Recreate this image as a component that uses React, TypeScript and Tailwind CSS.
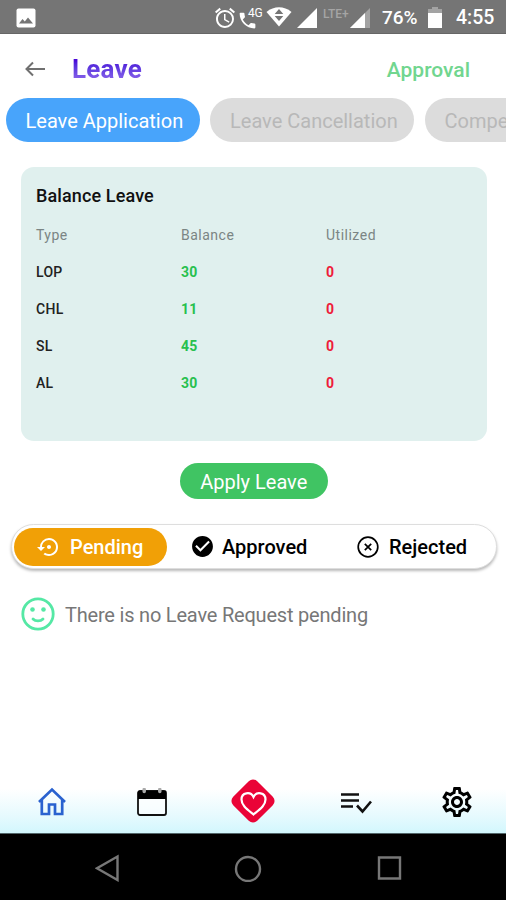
import { MdAlarm, MdCheckCircle, MdOutlineSettings, MdPhone, MdSettingsBackupRestore } from "react-icons/md";

const tabs = [
  { label: "Leave Application", active: true, width: "w-[194px]" },
  { label: "Leave Cancellation", active: false, width: "w-[204px]" },
  { label: "Compe", active: false, width: "w-[120px]" },
];

const balances = [
  { type: "LOP", balance: 30, utilized: 0 },
  { type: "CHL", balance: 11, utilized: 0 },
  { type: "SL", balance: 45, utilized: 0 },
  { type: "AL", balance: 30, utilized: 0 },
];

function StatusBar() {
  return (
    <div className="flex h-[34px] items-center border-b border-[#666] bg-[#757575] pl-4 text-white">
      <svg className="mt-0.5 h-5 w-5" viewBox="0 0 20 20">
        <rect x="0.5" y="0.5" width="19" height="19" rx="2" fill="#fff" />
        <path d="M3 15.5 6.5 11l2.3 2.6L12 9.5l5 6z" fill="#757575" />
      </svg>
      <MdAlarm className="mt-0.5 ml-[177px] h-[24px] w-[24px]" />
      <div className="relative ml-[2px] h-6 w-[24px]">
        <MdPhone className="absolute top-[5px] -left-0.5 h-[21px] w-[21px]" />
        <span className="absolute top-[3px] left-[9px] bg-[#757575] text-[12px] leading-[10px] tracking-[-0.3px]">4G</span>
      </div>
      <svg className="mt-px ml-[3px] h-5 w-[26px]" viewBox="0 0 26 20">
        <path d="M0.5 5C8 -1.2 18 -1.2 25.5 5L13 19.5z" fill="#fff" />
        <path d="m13 2 4.3 5H8.7zM8.7 9h8.6L13 14z" fill="#757575" />
      </svg>
      <svg className="mt-0.5 ml-[5px] h-5 w-5" viewBox="0 0 20 20">
        <path d="M20 0v20H0z" fill="#fff" />
      </svg>
      <span className="-mt-1.5 ml-[6px] w-[27px] text-[12px] leading-4 font-medium text-[#a5a5a5]">LTE+</span>
      <svg className="mt-0.5 h-5 w-5" viewBox="0 0 20 20">
        <path d="M20 0v20H0z" fill="#a3a3a3" />
        <path d="M15 5v15H0z" fill="#fff" />
      </svg>
      <span className="mt-1 ml-[12px] w-[46px] text-[19px] font-medium">76%</span>
      <svg className="mt-0.5 h-[21px] w-[14px]" viewBox="0 0 14 21">
        <path d="M4 0h6v2h4v5H0V2h4z" fill="#a3a3a3" />
        <path d="M0 6h14v15H0z" fill="#fff" />
      </svg>
      <span className="mt-0.5 ml-[14px] text-[19.5px] font-medium">4:55</span>
    </div>
  );
}

function Header() {
  return (
    <header className="flex h-16 items-center pr-9 pl-[25px]">
      <svg className="mt-1.5 h-4 w-5" viewBox="0 0 20 16" fill="none" stroke="#707070" strokeWidth="2">
        <path d="M20 8H1.5M8 1.5 1.5 8 8 14.5" />
      </svg>
      <h1 className="mt-[5px] ml-[27px] bg-gradient-to-b from-[#4a08d8] from-25% to-[#8a62ea] to-85% bg-clip-text text-[26px] leading-8 font-bold tracking-[0.2px] text-transparent">
        Leave
      </h1>
      <span className="mt-2.5 ml-auto text-[21px] font-medium text-[#71d68f]">Approval</span>
    </header>
  );
}

function BalanceCard() {
  return (
    <section className="mt-[25px] mr-[19.5px] ml-[21px] h-[274px] rounded-[13px] bg-[#e0f0ee] pt-[17px] pl-[15px]">
      <h2 className="text-[18px] leading-6 font-medium tracking-[0.12px] text-[#111]">Balance Leave</h2>
      <div className="mt-[9px] grid h-[37px] grid-cols-[145px_145px_1fr] items-center text-[14px] tracking-[0.5px] text-[#7b8584]">
        <span>Type</span>
        <span>Balance</span>
        <span>Utilized</span>
      </div>
      {balances.map((row) => (
        <div
          key={row.type}
          className="grid h-[37px] grid-cols-[145px_145px_1fr] items-center pb-px text-[14px] font-medium tracking-[0.3px]"
        >
          <span className="text-[#222]">{row.type}</span>
          <span className="font-bold text-[#28c04e]">{row.balance}</span>
          <span className="font-bold text-[#ee1c3a]">{row.utilized}</span>
        </div>
      ))}
    </section>
  );
}

function StatusFilter() {
  return (
    <div className="mt-[25px] mr-[9px] ml-[11px] flex h-[45px] items-center rounded-full border border-[#dedede] bg-white pl-0.5 text-[20px] font-medium text-black shadow-[0_2px_3px_rgba(0,0,0,0.28)]">
      <div className="flex h-[38px] w-[153px] items-center rounded-full bg-[#f1a006] pl-[23px] text-white">
        <MdSettingsBackupRestore className="h-6 w-6" />
        <span className="ml-[9px]">Pending</span>
      </div>
      <div className="ml-[23px] flex w-[167px] items-center">
        <MdCheckCircle className="h-[25px] w-[25px]" />
        <span className="ml-[7px]">Approved</span>
      </div>
      <svg className="h-[22px] w-[22px]" viewBox="0 0 22 22" fill="none" stroke="currentColor" strokeWidth="1.7">
        <circle cx="11" cy="11" r="9.8" />
        <path d="m7.8 7.8 6.4 6.4M14.2 7.8l-6.4 6.4" />
      </svg>
      <span className="ml-[10px]">Rejected</span>
    </div>
  );
}

function BottomNav() {
  return (
    <nav className="mt-auto h-[68px] bg-linear-to-b from-white from-35% via-[#e6fafe] via-75% to-[#d2f7fd]">
      <div className="grid h-full grid-cols-[103px_98px_103px_103px_99px] place-items-center pt-1.5">
        <svg className="h-[30px] w-[30px]" viewBox="0 0 30 30" fill="none" stroke="#2a62cf" strokeWidth="2.7">
          <path d="M2 15 15 2.5 28 15" />
          <path d="M4.8 13v14H12V17.5h6V27h7.2V13" />
        </svg>
        <svg className="h-7 w-[30px]" viewBox="0 0 30 28">
          <rect x="1" y="3" width="28" height="24" rx="2" fill="#fff" fillOpacity="0.6" stroke="#111" strokeWidth="1.8" />
          <path d="M1 3h28v8H1z" fill="#000" />
          <path d="M7.2 1.5v2M22.8 1.5v2" stroke="#aaa" strokeWidth="3.5" strokeLinecap="round" />
        </svg>
        <svg className="-mt-0.5 h-[46px] w-[46px]" viewBox="0 0 46 46">
          <rect x="6" y="6" width="34" height="34" rx="6" transform="rotate(45 23 23)" fill="#ea0437" />
          <path
            d="M23.5 36.5C17.5 31.5 11.5 27.500 11.500 21.500c0-7 9-8.500 12-2.500 3-6 12-4.500 12 2.500 0 6-6 10-12 15z"
            fill="none"
            stroke="#fff"
            strokeWidth="2.2"
          />
        </svg>
        <svg className="h-[24px] w-[32px]" viewBox="0 0 32 24" fill="none" stroke="#111" strokeWidth="2.6">
          <path d="M1 4.5h18M1 10.5h18M1 16.5h12" />
          <path d="m17 15.5 5.5 6 8.5-10" />
        </svg>
        <MdOutlineSettings className="h-[36px] w-[36px]" />
      </div>
    </nav>
  );
}

function SystemNav() {
  return (
    <div className="flex h-[67px] items-center border-t border-[#52666a] bg-black pt-0.5 pl-[95px]">
      <svg className="h-7 w-[310px]" viewBox="0 0 310 28" fill="none" stroke="#777" strokeWidth="2.4">
        <path d="M22.5 2.5v23.5L2 14.3z" />
        <circle cx="153" cy="15" r="12" />
        <path d="M284 3.5h21v21h-21z" />
      </svg>
    </div>
  );
}

export default function App() {
  return (
    <div className="flex h-[900px] w-[506px] flex-col overflow-hidden bg-white font-['Roboto',sans-serif]">
      <StatusBar />
      <Header />
      <div className="flex gap-[10.5px] overflow-hidden pl-[5.5px]">
        {tabs.map((tab) => (
          <button
            key={tab.label}
            className={`h-11 shrink-0 rounded-full pt-0.5 pl-5 text-left text-[20px] whitespace-nowrap ${tab.width} ${
              tab.active ? "bg-[#48a4fb] text-white" : "bg-[#dcdcdc] text-[#b8b8b8]"
            }`}
          >
            {tab.label}
          </button>
        ))}
      </div>
      <BalanceCard />
      <button className="mt-[22px] ml-[180px] h-9 w-[147.5px] rounded-full bg-[#40c463] pt-0.5 text-[20px] text-white">
        Apply Leave
      </button>
      <StatusFilter />
      <div className="mt-7 ml-[21px] flex items-center">
        <svg className="h-[34px] w-[34px]" viewBox="0 0 34 34" fill="none" stroke="#55e8a5" strokeWidth="2.8">
          <circle cx="17" cy="17" r="15.2" />
          <path d="M12 22c2.5 2.6 7.5 2.6 10 0" strokeLinecap="round" />
          <circle cx="11.5" cy="12.5" r="2.3" fill="#55e8a5" stroke="none" />
          <circle cx="22.5" cy="12.5" r="2.3" fill="#55e8a5" stroke="none" />
        </svg>
        <p className="mt-0.5 ml-2.5 text-[20px] tracking-[-0.2px] text-[#777]">There is no Leave Request pending</p>
      </div>
      <BottomNav />
      <SystemNav />
    </div>
  );
}
